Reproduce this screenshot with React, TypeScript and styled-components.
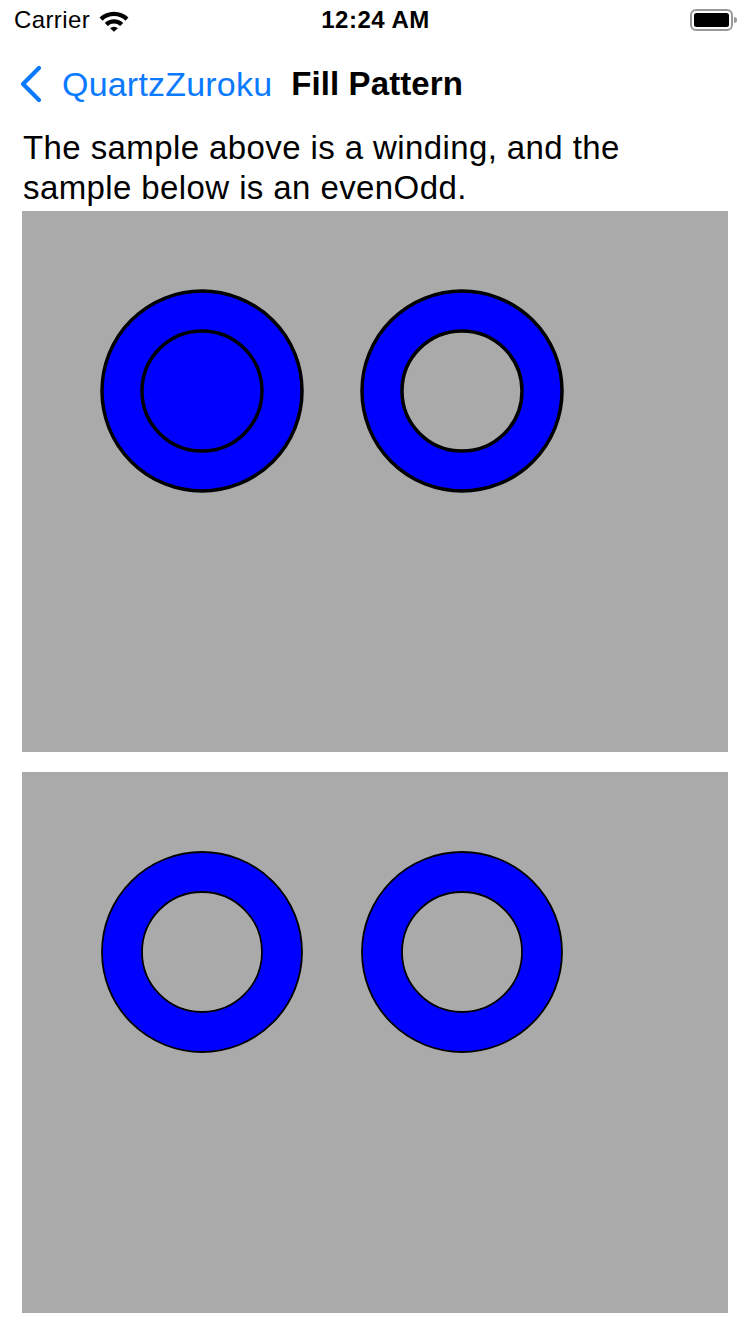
import styled, { createGlobalStyle } from "styled-components";

//global
const GlobalStyle = createGlobalStyle`
  html, body {
    margin: 0;
    padding: 0;
    background: #ffffff;
  }
  body {
    font-family: "Liberation Sans", Arial, sans-serif;
    color: #000;
  }
`;

const Screen = styled.div`
  width: 750px;
  height: 1334px;
  display: flex;
  flex-direction: column;
  overflow: hidden;
`;

//status bar
const StatusBar = styled.div`
  height: 40px;
  display: grid;
  grid-template-columns: 1fr auto 1fr;
  align-items: center;
  padding: 0 13px 0 14px;
  font-size: 24px;
`;

const StatusLeft = styled.div`
  display: flex;
  align-items: center;
  gap: 8px;
  letter-spacing: 0.4px;
`;

const Time = styled.div`
  font-weight: 700;
  font-size: 24px;
  letter-spacing: 0.5px;
`;

const StatusRight = styled.div`
  display: flex;
  justify-content: flex-end;
  align-items: center;
`;

//nav bar
const NavBar = styled.div`
  height: 88px;
  display: flex;
  align-items: center;
  padding-left: 18px;
`;

const BackButton = styled.div`
  display: flex;
  align-items: center;
  gap: 18px;
  color: #0a7aff;
  font-size: 34px;
  letter-spacing: 0.2px;
`;

const Title = styled.div`
  margin-left: 19px;
  font-size: 33px;
  font-weight: 700;
  letter-spacing: 0.1px;
`;

//content
const Content = styled.div`
  display: flex;
  flex-direction: column;
  padding: 0 22px;
`;

const Description = styled.p`
  margin: 0;
  padding-left: 1px;
  font-size: 33px;
  line-height: 40px;
  height: 83px;
  letter-spacing: 0.4px;
`;

const Panels = styled.div`
  display: flex;
  flex-direction: column;
  gap: 20px;
`;

const Panel = styled.div`
  width: 706px;
  height: 541px;
  background: #aaaaaa;
`;

type Rule = "nonzero" | "evenodd";

const RingSample = ({ rule, stroke }: { rule: Rule; stroke: number }) => {
  const ring = (cx: number) =>
    `M ${cx + 100} 180 A 100 100 0 1 1 ${cx - 100} 180 A 100 100 0 1 1 ${cx + 100} 180 Z ` +
    `M ${cx + 60} 180 A 60 60 0 1 1 ${cx - 60} 180 A 60 60 0 1 1 ${cx + 60} 180 Z`;
  // second ring: inner circle drawn the other way, so winding leaves a hole too
  const ringReversed = (cx: number) =>
    `M ${cx + 100} 180 A 100 100 0 1 1 ${cx - 100} 180 A 100 100 0 1 1 ${cx + 100} 180 Z ` +
    `M ${cx + 60} 180 A 60 60 0 1 0 ${cx - 60} 180 A 60 60 0 1 0 ${cx + 60} 180 Z`;
  return (
    <Panel>
      <svg width="706" height="541" viewBox="0 0 706 541">
        <path d={ring(180)} fill="#0000ff" fillRule={rule} stroke="#000" strokeWidth={stroke} />
        <path d={ringReversed(440)} fill="#0000ff" fillRule={rule} stroke="#000" strokeWidth={stroke} />
      </svg>
    </Panel>
  );
};

const WifiIcon = () => (
  <svg width="32" height="23" viewBox="0 0 31 22">
    <path d="M1.5 8.2 A20 20 0 0 1 29.5 8.2 L26.6 11.2 A16 16 0 0 0 4.4 11.2 Z" fill="#000" />
    <path d="M6.6 13.4 A13 13 0 0 1 24.4 13.4 L21.5 16.3 A9 9 0 0 0 9.5 16.3 Z" fill="#000" />
    <path d="M11.7 18.5 A5.6 5.6 0 0 1 19.3 18.5 L15.5 22 Z" fill="#000" />
  </svg>
);

const Battery = () => (
  <svg width="47" height="22" viewBox="0 0 47 22">
    <rect x="1" y="1" width="41" height="20" rx="5" fill="none" stroke="#999" strokeWidth="2" />
    <rect x="4" y="4" width="35" height="14" rx="2.5" fill="#000" />
    <path d="M44 8 a3 3 0 0 1 0 6 Z" fill="#999" />
  </svg>
);

const Chevron = () => (
  <svg width="26" height="38" viewBox="0 0 26 38">
    <path d="M21 3 L5 19 L21 35" fill="none" stroke="#0a7aff" strokeWidth="4.2" strokeLinecap="round" strokeLinejoin="round" />
  </svg>
);

const App = () => {
  return (
    <>
      <GlobalStyle />
      <Screen>
        <StatusBar>
          <StatusLeft>
            <span>Carrier</span>
            <WifiIcon />
          </StatusLeft>
          <Time>12:24 AM</Time>
          <StatusRight>
            <Battery />
          </StatusRight>
        </StatusBar>
        <NavBar>
          <BackButton>
            <Chevron />
            <span>QuartzZuroku</span>
          </BackButton>
          <Title>Fill Pattern</Title>
        </NavBar>
        <Content>
          <Description>
            The sample above is a winding, and the
            <br />
            sample below is an evenOdd.
          </Description>
          <Panels>
            <RingSample rule="nonzero" stroke={3.5} />
            <RingSample rule="evenodd" stroke={1.8} />
          </Panels>
        </Content>
      </Screen>
    </>
  );
};

export default App;
